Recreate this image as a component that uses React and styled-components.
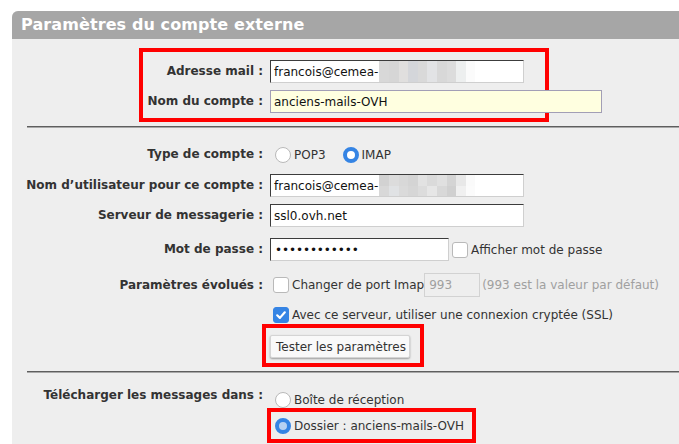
import React from 'react';
import styled, { createGlobalStyle, css } from 'styled-components';

const Global = createGlobalStyle`
  html, body { margin: 0; padding: 0; background: #ffffff; }
  body {
    font-family: "DejaVu Sans", Verdana, sans-serif;
    font-size: 12px;
    color: #333333;
  }
  * { box-sizing: border-box; }
`;

const Page = styled.div`
  padding: 11px 0 0 12px;
  height: 444px;
  overflow: hidden;
`;

const Panel = styled.section`
  background: #eeeeee;
  border-top-left-radius: 6px;
  min-height: 460px;
`;

const Title = styled.h2`
  margin: 0;
  height: 28px;
  line-height: 28px;
  padding-left: 9px;
  background: #a6a6a6;
  color: #ffffff;
  font-size: 16px;
  font-weight: bold;
  letter-spacing: 0.1px;
  border-top-left-radius: 6px;
`;

const Highlight = styled.div`
  border: 4px solid #ff0000;
  width: ${(p) => p.$w}px;
  margin: ${(p) => p.$m};
  padding: ${(p) => p.$p};
`;

const Row = styled.div`
  display: grid;
  grid-template-columns: ${(p) => p.$label}px auto;
  column-gap: 7px;
  align-items: ${(p) => p.$align || 'center'};
  margin-top: ${(p) => p.$mt || 0}px;
  min-height: ${(p) => p.$h || 0}px;
`;

const Label = styled.div`
  text-align: right;
  font-weight: bold;
  white-space: nowrap;
  line-height: 17px;
`;

const Value = styled.div`
  display: flex;
  align-items: center;
  white-space: nowrap;
`;

const Options = styled.div`
  display: flex;
  flex-direction: column;
  padding-top: ${(p) => p.$pt || 0}px;
`;

const Separator = styled.hr`
  margin: ${(p) => p.$mt}px 0 0 15px;
  border: 0;
  border-top: 1px solid #5e5e5e;
  border-bottom: 1px solid #a8a8a8;
  height: 0;
`;

const Field = styled.div`
  width: ${(p) => p.$w}px;
  height: ${(p) => p.$h || 23}px;
  display: flex;
  align-items: center;
  padding-left: 3px;
  white-space: nowrap;
  overflow: hidden;
  color: #111111;
  background: #ffffff;
  border-top: 1px solid #3c3c3c;
  border-left: 1px solid #3c3c3c;
  border-right: 1px solid #cfcfcf;
  border-bottom: 1px solid #cfcfcf;
  ${(p) =>
    p.$yellow &&
    css`
      background: #ffffe0;
      border: 1px solid #a29eb6;
    `}
  ${(p) =>
    p.$disabled &&
    css`
      background: #eeeeee;
      border: 1px solid #d2d2d2;
      color: #a0a0a0;
      padding-left: 4px;
    `}
`;

const Dots = styled.span`
  letter-spacing: -0.1px;
  font-size: 12px;
  padding-left: 1px;
`;

const Mosaic = styled.span`
  display: grid;
  grid-auto-flow: column;
  grid-template-rows: repeat(${(p) => p.$rows}, 1fr);
  align-self: stretch;
  width: 96px;
  margin-left: 1px;
`;

const Cell = styled.span`
  background: ${(p) => p.$c};
`;

const Radio = styled.span`
  display: inline-block;
  flex: none;
  width: 16px;
  height: 16px;
  border-radius: 50%;
  background: #ffffff;
  border: 1px solid #b9b9b9;
  margin-left: ${(p) => p.$ml ?? 5}px;
  ${(p) =>
    p.$checked &&
    css`
      border: 4px solid #3584e4;
      background: ${p.$focus ? '#b7d1f2' : '#ffffff'};
    `}
`;

const Box = styled.span`
  display: inline-flex;
  align-items: center;
  justify-content: center;
  flex: none;
  width: 16px;
  height: 16px;
  border-radius: 3px;
  background: #ffffff;
  border: 1px solid #b9b9b9;
  margin-left: ${(p) => p.$ml ?? 3}px;
  ${(p) =>
    p.$checked &&
    css`
      background: #3584e4;
      border-color: #3584e4;
    `}
`;

const Option = styled.label`
  display: flex;
  align-items: center;
  gap: 3px;
  height: ${(p) => p.$h || 16}px;
  margin-right: ${(p) => p.$mr || 0}px;
  white-space: nowrap;
`;

const Hint = styled.span`
  color: #a0a0a0;
  margin-left: 2px;
`;

const Button = styled.button`
  width: 140px;
  height: 23px;
  padding: 0 0 0 5px;
  text-align: left;
  font-family: inherit;
  font-size: 12px;
  color: #333333;
  background: #f9f9f9;
  border: 1px solid #d4d4d4;
  border-radius: 2px;
  box-shadow: 0 1px 2px rgba(0, 0, 0, 0.35);
`;

const Check = () => (
  <svg width="12" height="12" viewBox="0 0 12 12">
    <path d="M2.2 6.3 L4.9 8.9 L9.8 3.3" fill="none" stroke="#ffffff" strokeWidth="2.2" strokeLinecap="round" strokeLinejoin="round" />
  </svg>
);

const mosaic1 = ['#d8d8d8', '#d6d6d6', '#e0dfde', '#d4d6da', '#d9d9d9', '#e2e3e5', '#d8d8d8', '#dcdcdc', '#edefef', '#fbfbfb'];
const mosaic2 = [
  '#d2d2d2', '#d8d8d8',
  '#dcdcdc', '#e0e2e4',
  '#d8d8d8', '#dadada',
  '#d4d4d4', '#d6d6d6',
  '#e2e2e2', '#dcdcdc',
  '#dadada', '#e6e6e6',
  '#e0e0e0', '#d8d8d8',
  '#d4d4d4', '#d0d0d0',
  '#e8e8e8', '#f0f0f0',
  '#fafafa', '#fbfbfb',
];

export default function App() {
  return (
    <>
      <Global />
      <Page>
        <Panel>
          <Title>Paramètres du compte externe</Title>

          <Highlight $w={410} $m="9px 0 0 127px" $p="8px 0 5px 0">
            <Row $label={120}>
              <Label>Adresse mail :</Label>
              <Value>
                <Field $w={254}>
                  francois@cemea-
                  <Mosaic $rows={1}>
                    {mosaic1.map((c, i) => (
                      <Cell key={i} $c={c} />
                    ))}
                  </Mosaic>
                </Field>
              </Value>
            </Row>
            <Row $label={120} $mt={7}>
              <Label>Nom du compte :</Label>
              <Value>
                <Field $w={332} $yellow>anciens-mails-OVH</Field>
              </Value>
            </Row>
          </Highlight>

          <Separator $mt={4} />

          <Row $label={251} $mt={15} $h={23}>
            <Label>Type de compte :</Label>
            <Value>
              <Option $mr={17}>
                <Radio />
                POP3
              </Option>
              <Option>
                <Radio $checked $ml={0} />
                IMAP
              </Option>
            </Value>
          </Row>

          <Row $label={251} $mt={8}>
            <Label>Nom d’utilisateur pour ce compte :</Label>
            <Value>
              <Field $w={254}>
                francois@cemea-
                <Mosaic $rows={2}>
                  {mosaic2.map((c, i) => (
                    <Cell key={i} $c={c} />
                  ))}
                </Mosaic>
              </Field>
            </Value>
          </Row>

          <Row $label={251} $mt={7}>
            <Label>Serveur de messagerie :</Label>
            <Value>
              <Field $w={254}>ssl0.ovh.net</Field>
            </Value>
          </Row>

          <Row $label={251} $mt={11}>
            <Label>Mot de passe :</Label>
            <Value>
              <Field $w={179}>
                <Dots>••••••••••••</Dots>
              </Field>
              <Option>
                <Box />
                Afficher mot de passe
              </Option>
            </Value>
          </Row>

          <Row $label={251} $mt={12}>
            <Label>Paramètres évolués :</Label>
            <Value>
              <Option>
                <Box />
                Changer de port Imap
              </Option>
              <Field $w={56} $h={24} $disabled>993</Field>
              <Hint>(993 est la valeur par défaut)</Hint>
            </Value>
          </Row>

          <Row $label={251} $mt={10}>
            <span />
            <Value>
              <Option>
                <Box $checked>
                  <Check />
                </Box>
                Avec ce serveur, utiliser une connexion cryptée (SSL)
              </Option>
            </Value>
          </Row>

          <Row $label={251} $mt={1}>
            <span />
            <Value>
              <Highlight $w={162} $m="0 0 0 -8px" $p="7px 0 5px 4px">
                <Button type="button">Tester les paramètres</Button>
              </Highlight>
            </Value>
          </Row>

          <Separator $mt={4} />

          <Row $label={251} $mt={14} $align="start">
            <Label>Télécharger les messages dans :</Label>
            <Options $pt={5}>
              <Option>
                <Radio />
                Boîte de réception
              </Option>
              <Highlight $w={209} $m="0 0 0 -3px" $p="6px 0 5px 4px">
                <Option>
                  <Radio $checked $focus $ml={0} />
                  Dossier : anciens-mails-OVH
                </Option>
              </Highlight>
            </Options>
          </Row>
        </Panel>
      </Page>
    </>
  );
}
